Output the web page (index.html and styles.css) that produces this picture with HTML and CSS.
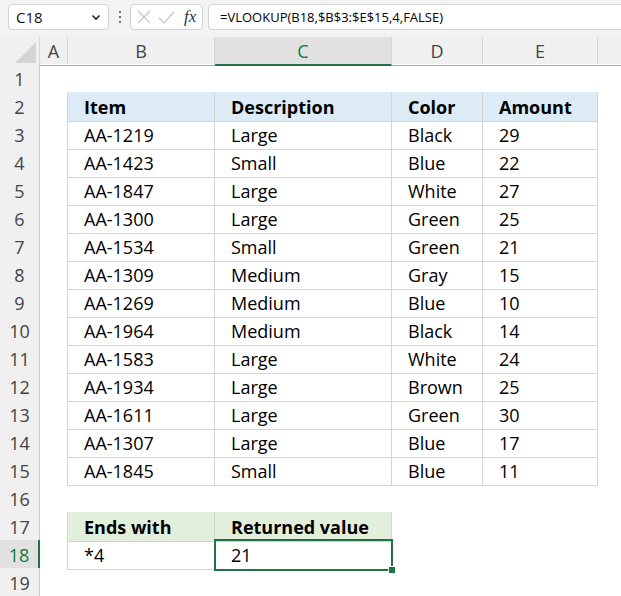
FILE: index.html
```html
<!DOCTYPE html>
<html>
<head>
<meta charset="utf-8">
<link rel="stylesheet" href="styles.css">
</head>
<body>
<div class="toolbar">
  <div class="namebox"><span>C18</span>
    <svg class="chev" width="10" height="7" viewBox="0 0 10 7"><path d="M1.5 1.5 L5 5 L8.5 1.5" fill="none" stroke="#222" stroke-width="1.6"/></svg>
  </div>
  <div class="dots"><span></span><span></span><span></span></div>
  <div class="fxgroup">
    <svg width="14" height="14" viewBox="0 0 14 14"><path d="M1 1 L13 13 M13 1 L1 13" stroke="#c4c4c4" stroke-width="1.2" fill="none"/></svg>
    <svg width="17" height="13" viewBox="0 0 17 13"><path d="M1 7 L6 12 L16 1" stroke="#c4c4c4" stroke-width="1.2" fill="none"/></svg>
    <span class="fx">fx</span>
  </div>
  <div class="formula">=VLOOKUP(B18,$B$3:$E$15,4,FALSE)</div>
</div>

<div class="sheet">
  <div class="row hdr">
    <div class="corner"><svg width="21" height="21" viewBox="0 0 21 21"><path d="M21 0 L21 21 L0 21 Z" fill="#d4d4d4"/></svg></div>
    <div class="ch">A</div><div class="ch">B</div><div class="ch sel">C</div><div class="ch">D</div><div class="ch">E</div><div class="ch last"></div>
  </div>

  <div class="row"><div class="rh">1</div><div class="c"></div><div class="c bb"></div><div class="c bb"></div><div class="c bb"></div><div class="c bb"></div><div class="c"></div></div>
  <div class="row"><div class="rh">2</div><div class="c br"></div><div class="c b th">Item</div><div class="c b th">Description</div><div class="c b th">Color</div><div class="c b th">Amount</div><div class="c"></div></div>
  <div class="row"><div class="rh">3</div><div class="c br"></div><div class="c b">AA-1219</div><div class="c b">Large</div><div class="c b">Black</div><div class="c b">29</div><div class="c"></div></div>
  <div class="row"><div class="rh">4</div><div class="c br"></div><div class="c b">AA-1423</div><div class="c b">Small</div><div class="c b">Blue</div><div class="c b">22</div><div class="c"></div></div>
  <div class="row"><div class="rh">5</div><div class="c br"></div><div class="c b">AA-1847</div><div class="c b">Large</div><div class="c b">White</div><div class="c b">27</div><div class="c"></div></div>
  <div class="row"><div class="rh">6</div><div class="c br"></div><div class="c b">AA-1300</div><div class="c b">Large</div><div class="c b">Green</div><div class="c b">25</div><div class="c"></div></div>
  <div class="row"><div class="rh">7</div><div class="c br"></div><div class="c b">AA-1534</div><div class="c b">Small</div><div class="c b">Green</div><div class="c b">21</div><div class="c"></div></div>
  <div class="row"><div class="rh">8</div><div class="c br"></div><div class="c b">AA-1309</div><div class="c b">Medium</div><div class="c b">Gray</div><div class="c b">15</div><div class="c"></div></div>
  <div class="row"><div class="rh">9</div><div class="c br"></div><div class="c b">AA-1269</div><div class="c b">Medium</div><div class="c b">Blue</div><div class="c b">10</div><div class="c"></div></div>
  <div class="row"><div class="rh">10</div><div class="c br"></div><div class="c b">AA-1964</div><div class="c b">Medium</div><div class="c b">Black</div><div class="c b">14</div><div class="c"></div></div>
  <div class="row"><div class="rh">11</div><div class="c br"></div><div class="c b">AA-1583</div><div class="c b">Large</div><div class="c b">White</div><div class="c b">24</div><div class="c"></div></div>
  <div class="row"><div class="rh">12</div><div class="c br"></div><div class="c b">AA-1934</div><div class="c b">Large</div><div class="c b">Brown</div><div class="c b">25</div><div class="c"></div></div>
  <div class="row"><div class="rh">13</div><div class="c br"></div><div class="c b">AA-1611</div><div class="c b">Large</div><div class="c b">Green</div><div class="c b">30</div><div class="c"></div></div>
  <div class="row"><div class="rh">14</div><div class="c br"></div><div class="c b">AA-1307</div><div class="c b">Large</div><div class="c b">Blue</div><div class="c b">17</div><div class="c"></div></div>
  <div class="row"><div class="rh">15</div><div class="c br"></div><div class="c b">AA-1845</div><div class="c b">Small</div><div class="c b">Blue</div><div class="c b">11</div><div class="c"></div></div>
  <div class="row"><div class="rh">16</div><div class="c"></div><div class="c bb"></div><div class="c bb"></div><div class="c"></div><div class="c"></div><div class="c"></div></div>
  <div class="row"><div class="rh">17</div><div class="c br"></div><div class="c b tg">Ends with</div><div class="c b tg">Returned value</div><div class="c"></div><div class="c"></div><div class="c"></div></div>
  <div class="row"><div class="rh rsel">18</div><div class="c br"></div><div class="c b">*4</div><div class="c b active">21<span class="handle"></span></div><div class="c"></div><div class="c"></div><div class="c"></div></div>
  <div class="row"><div class="rh">19</div><div class="c"></div><div class="c"></div><div class="c"></div><div class="c"></div><div class="c"></div><div class="c"></div></div>
</div>
</body>
</html>
```

FILE: styles.css
```css
html, body {
  margin: 0;
  padding: 0;
}
body {
  width: 621px;
  height: 596px;
  overflow: hidden;
  background: #ffffff;
  font-family: "Open Sans", "Noto Sans", sans-serif;
  color: #000;
}

/* ---------- formula bar ---------- */
.toolbar {
  height: 37px;
  box-sizing: border-box;
  padding: 4px 0 0 8px;
  background: #f3f3f3;
  display: flex;
  align-items: flex-start;
  overflow: hidden;
}
.namebox {
  width: 101px;
  height: 26px;
  box-sizing: border-box;
  border: 1px solid #d3d3d3;
  border-radius: 4px;
  background: #fff;
  display: flex;
  align-items: center;
  justify-content: space-between;
  padding: 0 7px 0 7px;
  font-size: 15px;
  color: #111;
}
.dots {
  width: 21px;
  height: 26px;
  display: flex;
  flex-direction: column;
  align-items: center;
  justify-content: center;
  gap: 3px;
}
.dots span {
  width: 2px;
  height: 2px;
  background: #444;
  border-radius: 1px;
}
.fxgroup {
  width: 73px;
  height: 26px;
  box-sizing: border-box;
  border: 1px solid #d3d3d3;
  border-radius: 4px;
  background: #fff;
  display: flex;
  align-items: center;
  gap: 7px;
  padding-left: 6px;
}
.fx {
  font-family: "Liberation Serif", "DejaVu Serif", serif;
  font-style: italic;
  font-size: 17px;
  color: #333;
  margin-left: 2px;
}
.formula {
  flex: 1;
  margin-left: 5px;
  margin-right: -6px;
  height: 26px;
  box-sizing: border-box;
  border: 1px solid #d3d3d3;
  border-radius: 4px;
  background: #fff;
  padding-left: 11px;
  font-size: 13px;
  line-height: 24px;
  color: #000;
  white-space: nowrap;
}

/* ---------- sheet grid ---------- */
.row {
  display: grid;
  grid-template-columns: 40px 28px 147px 177px 91px 115px 1fr;
  height: 28px;
}
.row.hdr {
  height: 27px;
  background: #f0f0f0;
}
.corner {
  box-sizing: border-box;
  border-right: 1px solid #d6d6d6;
  border-bottom: 1px solid #ababab;
  display: flex;
  align-items: flex-end;
  justify-content: flex-end;
  padding: 0 3px 2px 0;
}
.ch {
  box-sizing: border-box;
  border-right: 1px solid #d6d6d6;
  border-bottom: 1px solid #ababab;
  text-align: center;
  font-size: 18px;
  line-height: 26px;
  padding-top: 1px;
  color: #444;
}
.ch.sel {
  background: #e1e1e1;
  color: #107c41;
  border-bottom: 2px solid #217346;
}
.ch.last {
  border-right: none;
}
.rh {
  box-sizing: border-box;
  background: #f0f0f0;
  border-right: 1px solid #c8c8c8;
  border-bottom: 1px solid #dedede;
  text-align: center;
  font-size: 18px;
  line-height: 28px;
  padding-top: 1px;
  color: #444;
}
.rh.rsel {
  background: #e1e1e1;
  color: #107c41;
  border-right: 2px solid #217346;
}
.c {
  box-sizing: border-box;
  padding-left: 16px;
  padding-top: 1px;
  font-size: 18px;
  line-height: 28px;
  white-space: nowrap;
}
.b {
  border-right: 1px solid #d4d4d4;
  border-bottom: 1px solid #d4d4d4;
}
.bb {
  border-bottom: 1px solid #d4d4d4;
}
.br {
  border-right: 1px solid #d4d4d4;
}
.th {
  background: #ddebf7;
  font-weight: 700;
}
.tg {
  background: #e2efda;
  font-weight: 700;
}
.active {
  position: relative;
}
.active::after {
  content: "";
  position: absolute;
  left: -1px;
  top: -1px;
  right: -2px;
  bottom: -2px;
  border: 2px solid #217346;
  pointer-events: none;
}
.handle {
  position: absolute;
  right: -5px;
  bottom: -5px;
  width: 6px;
  height: 6px;
  background: #217346;
  border: 1px solid #fff;
  z-index: 2;
}
```
